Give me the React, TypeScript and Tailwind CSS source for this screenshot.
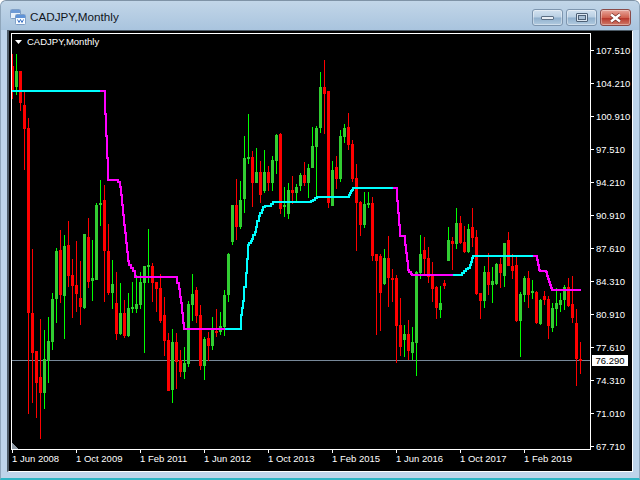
type Candle = [number, number, number, number, "r" | "g"];

// wick top, body top, body bottom, wick bottom, in page pixels. one bar every 4px from x=12
const candles: Candle[] = [
  [54, 66, 90, 99, "r"], [54, 71, 87, 95, "g"], [71, 71, 103, 111, "r"], [91, 105, 129, 170, "r"],
  [118, 128, 313, 414, "r"], [249, 313, 353, 403, "r"], [351, 351, 383, 418, "r"], [319, 377, 393, 439, "r"],
  [330, 359, 393, 409, "g"], [317, 341, 360, 383, "g"], [293, 299, 342, 350, "g"], [248, 251, 299, 323, "g"],
  [230, 250, 295, 303, "r"], [235, 246, 296, 339, "g"], [221, 245, 276, 287, "r"], [259, 275, 286, 318, "r"],
  [241, 285, 294, 312, "r"], [261, 298, 307, 325, "r"], [234, 234, 308, 309, "g"], [218, 237, 282, 288, "r"],
  [240, 278, 281, 301, "g"], [203, 205, 280, 280, "g"], [180, 203, 205, 226, "g"], [185, 200, 251, 302, "r"],
  [224, 251, 293, 295, "r"], [260, 284, 293, 309, "g"], [272, 303, 334, 340, "r"], [283, 313, 334, 335, "g"],
  [300, 313, 336, 338, "r"], [293, 308, 336, 337, "g"], [282, 307, 309, 313, "g"], [275, 304, 309, 313, "g"],
  [272, 282, 305, 309, "g"], [266, 266, 283, 353, "g"], [229, 265, 267, 283, "g"], [263, 266, 283, 302, "r"],
  [282, 282, 289, 312, "r"], [274, 288, 321, 323, "r"], [297, 315, 341, 356, "r"], [333, 340, 391, 391, "r"],
  [329, 342, 390, 403, "g"], [333, 342, 362, 389, "r"], [350, 360, 372, 377, "r"], [347, 363, 372, 379, "g"],
  [301, 304, 364, 367, "g"], [274, 294, 305, 321, "g"], [287, 290, 316, 323, "r"], [305, 315, 366, 370, "r"],
  [337, 339, 366, 380, "g"], [332, 338, 346, 361, "r"], [317, 330, 346, 350, "g"], [309, 331, 333, 337, "r"],
  [312, 326, 332, 335, "g"], [290, 295, 327, 336, "g"], [253, 254, 295, 302, "g"], [205, 205, 242, 245, "g"],
  [179, 205, 227, 240, "r"], [181, 200, 227, 229, "g"], [136, 158, 199, 213, "g"], [114, 157, 159, 164, "g"],
  [151, 157, 183, 207, "r"], [148, 172, 183, 183, "g"], [161, 172, 195, 203, "r"], [150, 172, 191, 193, "g"],
  [166, 172, 183, 191, "r"], [156, 160, 183, 191, "g"], [134, 135, 161, 174, "g"], [133, 134, 209, 214, "r"],
  [187, 205, 207, 217, "g"], [183, 190, 214, 219, "g"], [176, 190, 193, 204, "r"], [184, 187, 193, 201, "g"],
  [173, 175, 186, 191, "g"], [162, 175, 183, 186, "r"], [164, 168, 183, 198, "g"], [127, 146, 168, 168, "g"],
  [126, 128, 147, 196, "g"], [72, 87, 128, 133, "g"], [60, 87, 94, 134, "r"], [91, 91, 203, 208, "r"],
  [161, 170, 206, 206, "g"], [156, 167, 179, 189, "r"], [130, 136, 179, 182, "g"], [124, 128, 137, 143, "g"],
  [113, 127, 145, 150, "r"], [140, 144, 179, 182, "r"], [164, 178, 203, 251, "r"], [201, 202, 225, 236, "r"],
  [192, 204, 225, 228, "g"], [192, 203, 205, 208, "g"], [197, 203, 256, 261, "r"], [254, 254, 261, 335, "r"],
  [254, 256, 293, 331, "r"], [249, 258, 284, 285, "g"], [236, 258, 278, 307, "r"], [269, 278, 279, 302, "r"],
  [275, 278, 326, 363, "r"], [298, 325, 347, 356, "r"], [325, 334, 340, 357, "g"], [320, 334, 351, 360, "r"],
  [327, 342, 353, 360, "g"], [271, 272, 343, 376, "g"], [235, 254, 273, 279, "g"], [237, 250, 259, 276, "r"],
  [247, 258, 277, 283, "r"], [262, 276, 289, 302, "r"], [286, 287, 308, 319, "r"], [286, 303, 310, 318, "g"],
  [280, 283, 286, 289, "r"], [227, 240, 261, 261, "g"], [237, 241, 244, 270, "r"], [208, 223, 244, 249, "g"],
  [216, 223, 243, 244, "r"], [226, 242, 252, 253, "r"], [224, 229, 252, 253, "g"], [208, 227, 238, 247, "r"],
  [230, 237, 294, 295, "r"], [293, 293, 301, 319, "r"], [266, 272, 301, 308, "g"], [253, 272, 285, 295, "r"],
  [267, 281, 285, 303, "g"], [263, 264, 284, 285, "g"], [258, 264, 273, 288, "r"], [243, 243, 276, 287, "g"],
  [232, 240, 266, 266, "r"], [254, 266, 271, 279, "r"], [256, 265, 321, 322, "r"], [292, 294, 321, 357, "g"],
  [276, 278, 295, 302, "g"], [271, 278, 295, 308, "r"], [280, 291, 293, 299, "g"], [291, 292, 323, 324, "r"],
  [299, 300, 324, 325, "g"], [291, 296, 300, 305, "r"], [296, 299, 326, 339, "r"], [303, 308, 328, 332, "g"],
  [288, 303, 309, 326, "g"], [293, 300, 305, 312, "g"], [285, 287, 300, 310, "g"], [278, 287, 306, 307, "r"],
  [276, 304, 318, 323, "r"], [309, 323, 359, 386, "r"], [342, 359, 361, 374, "r"],
];

type Pt = [number, number];

// indicator line, each next point means: go across, then go down/up
const lines: { color: string; pts: Pt[] }[] = [
  { color: "#00ffff", pts: [[12, 91], [100, 91]] },
  {
    color: "#ff00ff",
    pts: [[100, 91], [105, 114], [106, 136], [107, 158], [108, 180], [117, 180], [118, 182], [120, 187], [121, 195], [122, 205], [123, 215], [124, 225], [125, 233], [126, 243], [127, 252], [128, 261], [129, 265], [131, 268], [133, 271], [135, 277], [177, 283], [179, 289], [180, 297], [181, 303], [182, 313], [183, 323], [184, 329], [225, 329]],
  },
  {
    color: "#00ffff",
    pts: [[225, 329], [241, 315], [242, 308], [243, 301], [244, 287], [246, 273], [247, 259], [248, 245], [249, 243], [251, 241], [252, 239], [253, 235], [255, 232], [256, 227], [257, 221], [259, 216], [260, 213], [262, 210], [263, 207], [265, 206], [271, 204], [273, 202], [310, 202], [311, 201], [313, 200], [315, 198], [317, 197], [348, 197], [349, 195], [350, 193], [351, 191], [352, 190], [353, 188], [393, 188]],
  },
  {
    color: "#ff00ff",
    pts: [[393, 188], [397, 201], [398, 213], [399, 225], [400, 236], [405, 245], [406, 253], [407, 261], [408, 270], [409, 272], [411, 274], [412, 275], [453, 275]],
  },
  {
    color: "#00ffff",
    pts: [[453, 275], [462, 273], [464, 271], [466, 269], [468, 268], [470, 265], [471, 262], [472, 258], [473, 256], [533, 256]],
  },
  {
    color: "#ff00ff",
    pts: [[533, 256], [537, 260], [538, 265], [539, 270], [540, 271], [545, 271], [546, 272], [547, 276], [548, 279], [549, 282], [550, 285], [551, 288], [552, 290], [581, 290]],
  },
];

const prices = ["107.510", "104.210", "100.910", "97.510", "94.210", "90.910", "87.610", "84.310", "80.910", "77.610", "74.310", "71.010", "67.710"];
const dates = ["1 Jun 2008", "1 Oct 2009", "1 Feb 2011", "1 Jun 2012", "1 Oct 2013", "1 Feb 2015", "1 Jun 2016", "1 Oct 2017", "1 Feb 2019"];

function stepPath(pts: Pt[]) {
  let d = `M${pts[0][0]} ${pts[0][1]}`;
  for (const [x, y] of pts.slice(1)) d += `H${x}V${y}`;
  return d;
}

function WindowIcon() {
  return (
    <svg width="16" height="16" viewBox="0 0 16 16" className="shrink-0">
      <rect x="0.5" y="0.5" width="10" height="9" rx="1" fill="#eaf2fb" stroke="#7f9fc6" />
      <rect x="1" y="1" width="9" height="3" fill="#6f9bd6" />
      <rect x="5.5" y="5.5" width="10" height="10" rx="1" fill="#f7fbff" stroke="#7f9fc6" />
      <rect x="6" y="6" width="9" height="3" fill="#5f93d8" />
      <path d="M7.5 10.5l1.5 3 1.5-3 1.5 3 1.5-3" fill="none" stroke="#3f74c4" strokeWidth="1" />
    </svg>
  );
}

function CaptionButton({ children, close }: { children: React.ReactNode; close?: boolean }) {
  return (
    <div
      className={
        close
          ? "flex h-[17px] w-[31px] items-center justify-center rounded-[3px] border border-[#8a4a48] bg-[linear-gradient(#e8a79c,#d0614f_50%,#b8382c_55%,#cf7a68)] shadow-[inset_0_0_0_1px_rgba(255,255,255,0.35)]"
          : "flex h-[17px] w-[31px] items-center justify-center rounded-[3px] border border-[#7d95ae] bg-[linear-gradient(#d3e2f0,#b9cfe3_48%,#8fafcc_52%,#b2cbe0)] shadow-[inset_0_0_0_1px_rgba(255,255,255,0.4)]"
      }
    >
      {children}
    </div>
  );
}

export default function App() {
  return (
    <div className="flex h-[480px] w-[640px] flex-col overflow-hidden bg-white font-['Liberation_Sans',sans-serif]">
      <div className="flex flex-1 flex-col rounded-t-[6px] border-x border-t border-b-2 border-x-[#8fa6bb] border-t-[#7f93a6] border-b-[#2fb5c4] bg-[#bdd4ea]">
        <div className="flex h-[29px] shrink-0 items-center rounded-t-[6px] bg-[linear-gradient(#c2d6e8,#a9c4de)] pl-[9px] pr-[8px] pt-[3px]">
          <WindowIcon />
          <span className="ml-[4px] text-[11.7px] text-[#10151c]">CADJPY,Monthly</span>
          <div className="-mt-[3px] ml-auto flex gap-[3px] self-start pt-[8px]">
            <CaptionButton>
              <div className="h-[4px] w-[13px] rounded-[1px] border border-[#5c6f84] bg-[#e8eef5]" />
            </CaptionButton>
            <CaptionButton>
              <div className="h-[9px] w-[12px] rounded-[1px] border border-[#4e6176] bg-[#dbe6f1] p-[1px]">
                <div className="h-full w-full border border-[#4e6176] bg-[#a9bfd4]" />
              </div>
            </CaptionButton>
            <CaptionButton close>
              <svg width="13" height="10" viewBox="0 0 13 10">
                <path d="M2 1.5L11 8.5M11 1.5L2 8.5" stroke="#6b2a24" strokeWidth="3.6" />
                <path d="M2 1.5L11 8.5M11 1.5L2 8.5" stroke="#ffffff" strokeWidth="2.4" />
              </svg>
            </CaptionButton>
          </div>
        </div>

        <div className="mb-[6px] ml-[6px] mr-[6px] flex flex-1 flex-col border-b border-l-2 border-r border-t border-b-white border-l-[#4c5a66] border-r-white border-t-[#4c5a66] bg-black pl-[2px] pt-[2px] text-[9.5px] text-white">
          <div className="flex">
            <div className="relative h-[417px] w-[580px] shrink-0 border border-white">
              <svg width="578" height="415" viewBox="12 34 578 415" shapeRendering="crispEdges" className="block">
                <rect x="12" y="360" width="578" height="1" fill="#778899" />
                {candles.map(([top, bodyTop, bodyBottom, bottom, c], i) => {
                  const x = 12 + i * 4;
                  return (
                    <g key={i}>
                      <rect x={x} y={top} width="1" height={bottom - top} fill={c === "r" ? "#ff0000" : "#00ff00"} />
                      <rect x={x - 1} y={bodyTop} width="3" height={Math.max(bodyBottom - bodyTop, 2)} fill={c === "r" ? "#ff0000" : "#32cd32"} />
                    </g>
                  );
                })}
                {lines.map((l, i) => (
                  <path key={i} d={stepPath(l.pts)} fill="none" stroke={l.color} strokeWidth="2" />
                ))}
                <path d="M12 443L18 449H12Z" fill="#8f9aa5" />
              </svg>
              <div className="absolute left-[3px] top-[2px] flex items-center gap-[5px] leading-[12px]">
                <svg width="7" height="4" viewBox="0 0 7 4">
                  <path d="M0 0H7L3.5 4Z" fill="#ffffff" />
                </svg>
                <span>CADJPY,Monthly</span>
              </div>
            </div>

            <div className="relative flex h-[417px] flex-1 flex-col pt-[1px]">
              {prices.map((p) => (
                <div key={p} className="flex h-[33px] shrink-0 items-center">
                  <div className="h-px w-[3px] bg-white" />
                  <span className="ml-[2px] leading-none">{p}</span>
                </div>
              ))}
              <div className="absolute left-[1px] top-[322px] flex h-[11px] w-[36px] items-center justify-center bg-white leading-none text-black">76.290</div>
            </div>
          </div>

          <div className="flex pl-[1px]">
            {dates.map((d) => (
              <div key={d} className="w-[64px] shrink-0">
                <div className="h-[3px] w-px bg-white" />
                <div className="leading-[12px]">{d}</div>
              </div>
            ))}
          </div>
        </div>
      </div>
    </div>
  );
}
